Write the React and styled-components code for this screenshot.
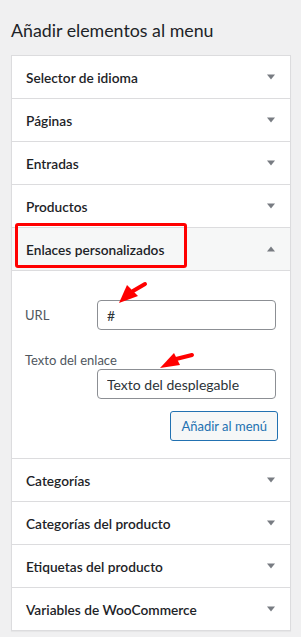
import React from 'react';
import styled, { createGlobalStyle } from 'styled-components';

const GlobalStyle = createGlobalStyle`
  body {
    margin: 0;
    background: #f0f0f1;
    font-family: Lato, "Open Sans", sans-serif;
    color: #1d2327;
  }
`;

const Page = styled.div`
  width: 301px;
  height: 637px;
  padding: 0 10px 0 11px;
  box-sizing: border-box;
`;

const Title = styled.h2`
  margin: 0;
  padding: 18px 0 0;
  height: 55px;
  box-sizing: border-box;
  font-size: 17.8px;
  font-weight: 400;
  line-height: 24px;
  color: #1d2327;
`;

const Box = styled.div`
  background: #fff;
  border: 1px solid #dcdcde;
  box-shadow: 0 1px 1px rgba(0, 0, 0, 0.04);
`;

const Section = styled.div`
  border-bottom: 1px solid #dcdcde;
  &:last-child {
    border-bottom: none;
  }
`;

const Header = styled.div`
  position: relative;
  display: flex;
  align-items: center;
  justify-content: space-between;
  height: 42px;
  padding: 0 14px 0 14px;
  background: ${p => (p.$open ? '#f6f7f7' : '#fff')};
  border-bottom: ${p => (p.$open ? '1px solid #dcdcde' : 'none')};
  font-size: 13.7px;
  font-weight: 600;
  color: #1d2327;
`;

const Highlight = styled.div`
  position: absolute;
  left: 3px;
  top: -5px;
  width: 172px;
  height: 45px;
  box-sizing: border-box;
  border: 3px solid #ff0000;
  border-radius: 3px;
  pointer-events: none;
`;

const Caret = ({ up }) => (
  <svg width="10" height="6" viewBox="0 0 10 6">
    <polygon
      points={up ? '1,5.5 9,5.5 5,0.5' : '1,0.5 9,0.5 5,5.5'}
      fill="#787c82"
    />
  </svg>
);

const Content = styled.div`
  position: relative;
  padding: 29px 12px 17px 13px;
`;

const FieldRow = styled.div`
  display: flex;
  align-items: center;
  justify-content: space-between;
`;

const StackRow = styled.div`
  display: flex;
  flex-direction: column;
  align-items: flex-end;
  margin-top: 21px;
`;

const Label = styled.label`
  font-size: 13px;
  color: #50575e;
  line-height: 18px;
  align-self: ${p => (p.$stacked ? 'flex-start' : 'center')};
`;

const Input = styled.input`
  width: 179px;
  height: 30px;
  box-sizing: border-box;
  margin-right: 2px;
  border: 1px solid #8c8f94;
  border-radius: 4px;
  padding: 0 9px;
  font-family: inherit;
  font-size: 14px;
  color: #2c3338;
  background: #fff;
  outline: none;
`;

const Actions = styled.div`
  display: flex;
  justify-content: flex-end;
  margin-top: 12px;
`;

const Button = styled.button`
  height: 30px;
  padding: 0 10px;
  border: 1px solid #2271b1;
  border-radius: 3px;
  background: #f6f7f7;
  color: #2271b1;
  font-family: inherit;
  font-size: 13px;
  cursor: pointer;
`;

const Arrows = styled.svg`
  position: absolute;
  left: 0;
  top: 0;
  width: 100%;
  height: 100%;
  pointer-events: none;
`;

const Arrow = ({ tip, left, right, from, to }) => (
  <g>
    <line x1={from[0]} y1={from[1]} x2={to[0]} y2={to[1]} stroke="#ff0000" strokeWidth="4" strokeLinecap="round" />
    <polygon points={`${tip.join(',')} ${left.join(',')} ${right.join(',')}`} fill="#ff0000" />
  </g>
);

const before = ['Selector de idioma', 'Páginas', 'Entradas', 'Productos'];
const after = ['Categorías', 'Categorías del producto', 'Etiquetas del producto', 'Variables de WooCommerce'];

export default function App() {
  return (
    <Page>
      <GlobalStyle />
      <Title>Añadir elementos al menu</Title>
      <Box>
        {before.map(name => (
          <Section key={name}>
            <Header>
              {name}
              <Caret />
            </Header>
          </Section>
        ))}
        <Section>
          <Header $open>
            <Highlight />
            Enlaces personalizados
            <Caret up />
          </Header>
          <Content>
            <FieldRow>
              <Label>URL</Label>
              <Input defaultValue="#" />
            </FieldRow>
            <StackRow>
              <Label $stacked>Texto del enlace</Label>
              <Input defaultValue="Texto del desplegable" />
            </StackRow>
            <Actions>
              <Button>Añadir al menú</Button>
            </Actions>
            <Arrows>
              <Arrow tip={[107, 32]} left={[115, 14]} right={[126, 25]} from={[121, 20]} to={[133, 13]} />
              <Arrow tip={[148, 97]} left={[162, 82]} right={[168, 94]} from={[164, 88]} to={[180, 84]} />
            </Arrows>
          </Content>
        </Section>
        {after.map(name => (
          <Section key={name}>
            <Header>
              {name}
              <Caret />
            </Header>
          </Section>
        ))}
      </Box>
    </Page>
  );
}
